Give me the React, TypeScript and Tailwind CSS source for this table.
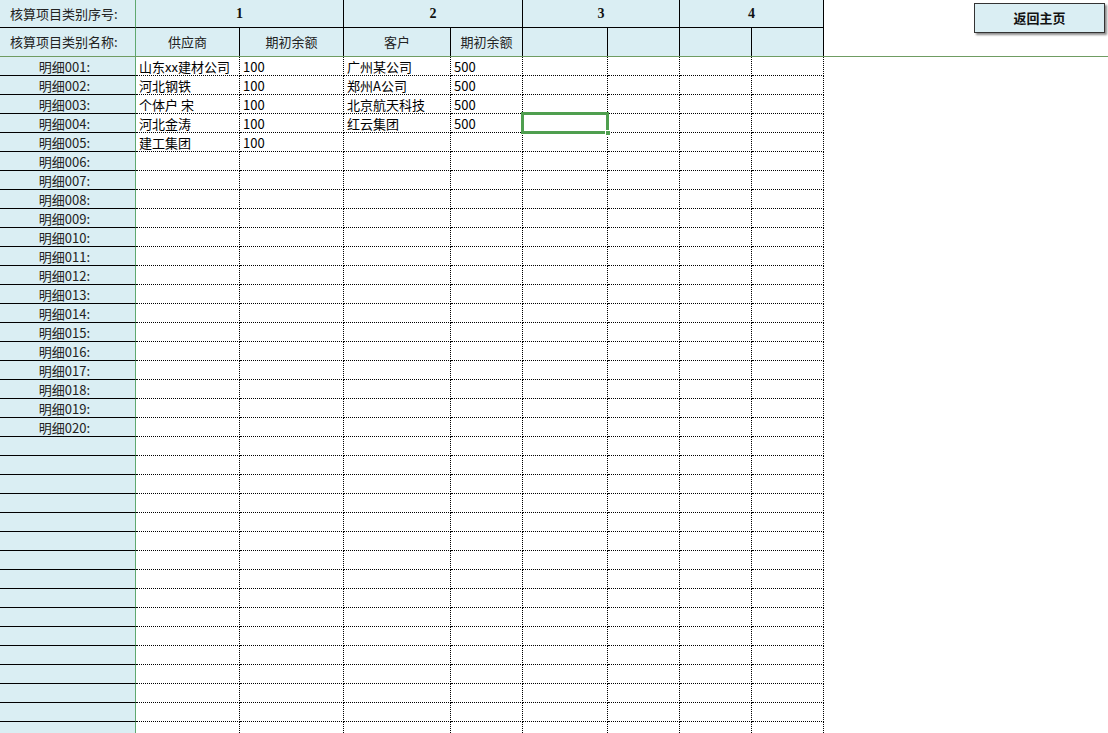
import React from "react"

const font = "font-['Noto_Sans_CJK_SC','Noto_Sans',sans-serif]"

// widths include the 1px right border of each cell
const colW = ["w-[104px]", "w-[104px]", "w-[107px]", "w-[72px]", "w-[85px]", "w-[72px]", "w-[72px]", "w-[72px]"]

const groups = [
  { no: "1", w: "w-[208px]" },
  { no: "2", w: "w-[179px]" },
  { no: "3", w: "w-[157px]" },
  { no: "4", w: "w-[144px]" },
]

const subHeads = ["供应商", "期初余额", "客户", "期初余额", "", "", "", ""]

const data: string[][] = [
  ["山东xx建材公司", "100", "广州某公司", "500"],
  ["河北钢铁", "100", "郑州A公司", "500"],
  ["个体户 宋", "100", "北京航天科技", "500"],
  ["河北金涛", "100", "红云集团", "500"],
  ["建工集团", "100"],
]

const ROWS = 36

function pad(n: number) {
  return String(n).padStart(3, "0")
}

function Row({ index }: { index: number }) {
  const values = data[index] ?? []
  return (
    <div className="flex h-[19px]">
      <div className="w-[136px] h-[19px] shrink-0 bg-[#daeef3] border-r border-r-[#5fa86f] border-b border-b-black flex items-center justify-center pr-[6px] pt-[1px] text-[13px] leading-[18px] text-[#222]">
        {index < 20 ? `明细${pad(index + 1)}:` : ""}
      </div>
      {colW.map((w, c) => (
        <div
          key={c}
          className={`${w} h-[19px] shrink-0 relative border-r border-r-black border-b border-dotted border-b-black pl-[3px] pt-[2px] flex items-center text-[13px] leading-[18px] text-black whitespace-nowrap`}
        >
          {values[c] ?? ""}
          {index === 3 && c === 4 && (
            <div className="absolute -left-[2px] -top-[2px] w-[88px] h-[22px] border-[3px] border-[#4f9f4f] z-10">
              <div className="absolute -right-[5px] -bottom-[5px] w-[6px] h-[6px] bg-[#4f9f4f] border border-white" />
            </div>
          )}
        </div>
      ))}
    </div>
  )
}

export default function App() {
  return (
    <div className={`w-[1108px] h-[733px] overflow-hidden bg-white ${font}`}>
      {/* frozen header rows */}
      <div className="flex border-b border-b-[#6f9c62]">
        <div className="flex flex-col shrink-0">
          <div className="flex h-[28px]">
            <div className="w-[136px] bg-[#daeef3] border-r border-r-[#5fa86f] border-b border-b-black flex items-center pl-[10px] text-[13px] text-[#222]">
              核算项目类别序号:
            </div>
            {groups.map((g) => (
              <div
                key={g.no}
                className={`${g.w} bg-[#daeef3] border-r border-r-black border-b border-b-black flex items-center justify-center font-['Liberation_Serif',serif] font-bold text-[14px] text-[#111]`}
              >
                {g.no}
              </div>
            ))}
          </div>
          <div className="flex h-[28px]">
            <div className="w-[136px] bg-[#daeef3] border-r border-r-[#5fa86f] flex items-center pl-[10px] text-[13px] text-[#222]">
              核算项目类别名称:
            </div>
            {colW.map((w, c) => (
              <div
                key={c}
                className={`${w} bg-[#daeef3] border-r border-r-black flex items-center justify-center text-[13px] text-[#222]`}
              >
                {subHeads[c]}
              </div>
            ))}
          </div>
        </div>
        <div className="flex-1 flex justify-end items-start pt-[3px] pr-[3px]">
          <button className="w-[131px] h-[30px] bg-[#daeef3] border border-[#333] shadow-[2px_2px_2px_rgba(0,0,0,0.45)] text-[13px] font-bold text-[#111]">
            返回主页
          </button>
        </div>
      </div>

      {/* sheet body */}
      <div className="flex flex-col">
        {Array.from({ length: ROWS }).map((_, i) => (
          <Row key={i} index={i} />
        ))}
      </div>
    </div>
  )
}
